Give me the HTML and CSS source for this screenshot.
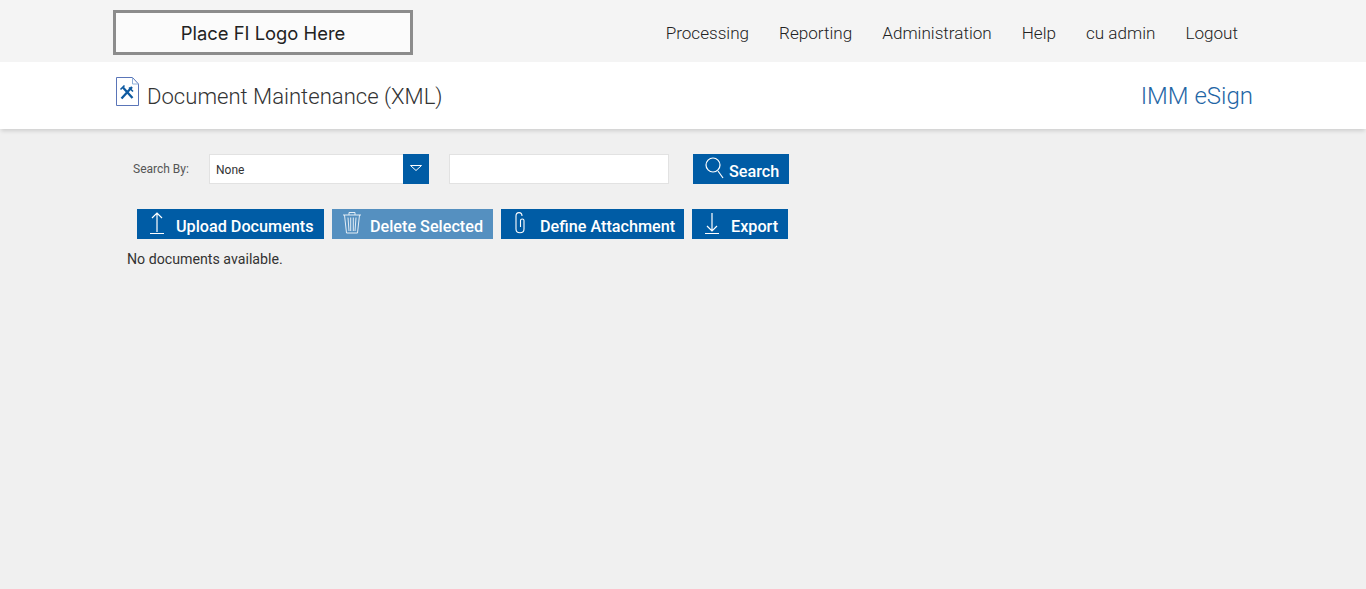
FILE: index.html
```html
<!DOCTYPE html>
<html lang="en">
<head>
<meta charset="utf-8">
<title>Document Maintenance (XML)</title>
<link rel="stylesheet" href="styles.css">
</head>
<body>
<header class="topbar">
  <div class="logo">Place FI Logo Here</div>
  <nav class="nav">
    <a>Processing</a><a>Reporting</a><a>Administration</a><a>Help</a><a>cu admin</a><a>Logout</a>
  </nav>
</header>
<section class="titlebar">
  <div class="title">
    <svg class="doc-icon" width="24" height="30" viewBox="0 0 24 30">
      <path d="M.5.5H16.500L22.500 7V28.500H.5Z" fill="#fff" stroke="#5a75b8"/>
      <path d="M16.500 .5V7H22.500" fill="none" stroke="#8fb0d8"/>
      <path d="M5.500 21.500L16 10M7 10.500L16.500 21" stroke="#0f5aa0" stroke-width="2.300"/>
      <path d="M4.500 12.500L8.500 8.500M13 10.500L17 14.500" stroke="#0f5aa0" stroke-width="1.600"/>
    </svg>
    <h1>Document Maintenance (XML)</h1>
  </div>
  <div class="brand">IMM eSign</div>
</section>
<main class="content">
  <form class="search">
    <label>Search By:</label>
    <div class="select"><span>None</span><i class="caret"><svg width="12" height="6" viewBox="0 0 12 6"><path d="M.5.5H11.500L6 5.500Z" fill="none" stroke="#fff"/></svg></i></div>
    <div class="input"></div>
    <a class="btn btn-search">
      <svg width="20" height="22" viewBox="0 0 20 22"><circle cx="8" cy="8" r="7" fill="none" stroke="#fff" stroke-width="1.200"/><path d="M13 14L18 21" stroke="#fff" stroke-width="1.200"/></svg>
      <span>Search</span>
    </a>
  </form>
  <div class="actions">
    <a class="btn btn-upload">
      <svg width="16" height="22" viewBox="0 0 16 22"><path d="M8 20V1M3 6L8 1L13 6M1 21.500H15" fill="none" stroke="#fff" stroke-width="1.200"/></svg>
      <span>Upload Documents</span>
    </a>
    <a class="btn btn-delete disabled">
      <svg width="20" height="24" viewBox="0 0 20 24"><path d="M1 4H19M7 4V1.500H13V4M2.500 4L4.500 22H15.500L17.500 4M6 6.500L7 20M8.700 6.500V20M11.300 6.500V20M14 6.500L13 20" fill="none" stroke="#e4eef6" stroke-width="1"/></svg>
      <span>Delete Selected</span>
    </a>
    <a class="btn btn-attach">
      <svg width="12" height="24" viewBox="0 0 12 24"><path d="M8 5C8 .5 2 .5 2 5V18C2 23 10 23 10 18V9.500C10 7.500 6.500 7.500 6.500 9.500V16" fill="none" stroke="#fff" stroke-width="1.100"/></svg>
      <span>Define Attachment</span>
    </a>
    <a class="btn btn-export">
      <svg width="16" height="22" viewBox="0 0 16 22"><path d="M8 1V19M3 14L8 19L13 14M1 21.500H15" fill="none" stroke="#fff" stroke-width="1.200"/></svg>
      <span>Export</span>
    </a>
  </div>
  <p class="empty">No documents available.</p>
</main>
</body>
</html>
```
FILE: styles.css
```css
* { box-sizing: border-box; }
html, body { height: 100%; }
body {
  margin: 0;
  background: #f0f0f0;
  font-family: Roboto, "Liberation Sans", sans-serif;
  color: #333;
  overflow: hidden;
}
.topbar {
  height: 62px;
  background: #f4f4f4;
  padding: 10px 113px 0;
  display: flex;
  justify-content: space-between;
  align-items: flex-start;
}
.logo {
  width: 300px;
  height: 45px;
  background: #fbfbfb;
  border: 3px solid #8c8c8c;
  font-family: Inter, "Open Sans", sans-serif;
  font-size: 18.4px;
  font-weight: 400;
  color: #222;
  display: flex;
  align-items: center;
  justify-content: center;
}
.nav {
  display: flex;
  gap: 30px;
  padding: 13px 15px 0 0;
  font-size: 17.1px;
  font-weight: 300;
  line-height: 20px;
  color: #222;
}
.titlebar {
  height: 67px;
  background: #fff;
  padding: 0 113px 0 116px;
  display: flex;
  justify-content: space-between;
  box-shadow: 0 3px 4px -1px rgba(0, 0, 0, .14);
}
.title { display: flex; align-items: flex-start; }
.doc-icon { margin-top: 15px; }
.title h1 {
  margin: 19px 0 0 7px;
  font-size: 22.1px;
  font-weight: 300;
  line-height: 30px;
  color: #333;
}
.brand {
  margin-top: 19px;
  font-size: 24px;
  font-weight: 300;
  line-height: 30px;
  color: #1f66a5;
}
.content { padding: 25px 0 0 127px; }
.search { display: flex; align-items: center; height: 30px; }
.search label {
  width: 82px;
  padding: 0 0 0 6px;
  font-size: 12px;
  color: #555;
}
.select {
  width: 220px;
  height: 30px;
  background: #fff;
  border: 1px solid #e2e2e2;
  border-right: 0;
  display: flex;
  justify-content: space-between;
  font-size: 12px;
  color: #333;
}
.select span { padding: 0 6px; line-height: 30px; }
.caret {
  width: 26px;
  height: 30px;
  margin-top: -1px;
  background: #005ca5;
  display: flex;
  align-items: center;
  justify-content: center;
  padding-bottom: 2px;
}
.input {
  width: 220px;
  height: 30px;
  margin: 0 24px 0 20px;
  background: #fff;
  border: 1px solid #e2e2e2;
}
.btn {
  height: 30px;
  background: #005ca5;
  color: #fff;
  font-size: 16.2px;
  font-weight: 500;
  display: flex;
  align-items: center;
  white-space: nowrap;
}
.btn span { position: relative; top: 2px; }
.btn svg { flex: none; margin-top: -2px; }
.btn.disabled { background: #5590c0; }
.btn-search { width: 96px; padding: 0 0 0 12px; gap: 4px; }
.btn-upload { width: 187px; padding: 0 0 0 12px; gap: 11px; }
.btn-delete { width: 161px; padding: 0 0 0 10px; gap: 8px; }
.btn-attach { width: 183px; padding: 0 0 0 13px; gap: 14px; }
.btn-export { width: 96px; padding: 0 0 0 12px; gap: 11px; }
.actions { display: flex; gap: 8px; margin: 25px 0 0 10px; }
.empty {
  margin: 12px 0 0;
  font-size: 14.2px;
  line-height: 16px;
  color: #333;
}
```
